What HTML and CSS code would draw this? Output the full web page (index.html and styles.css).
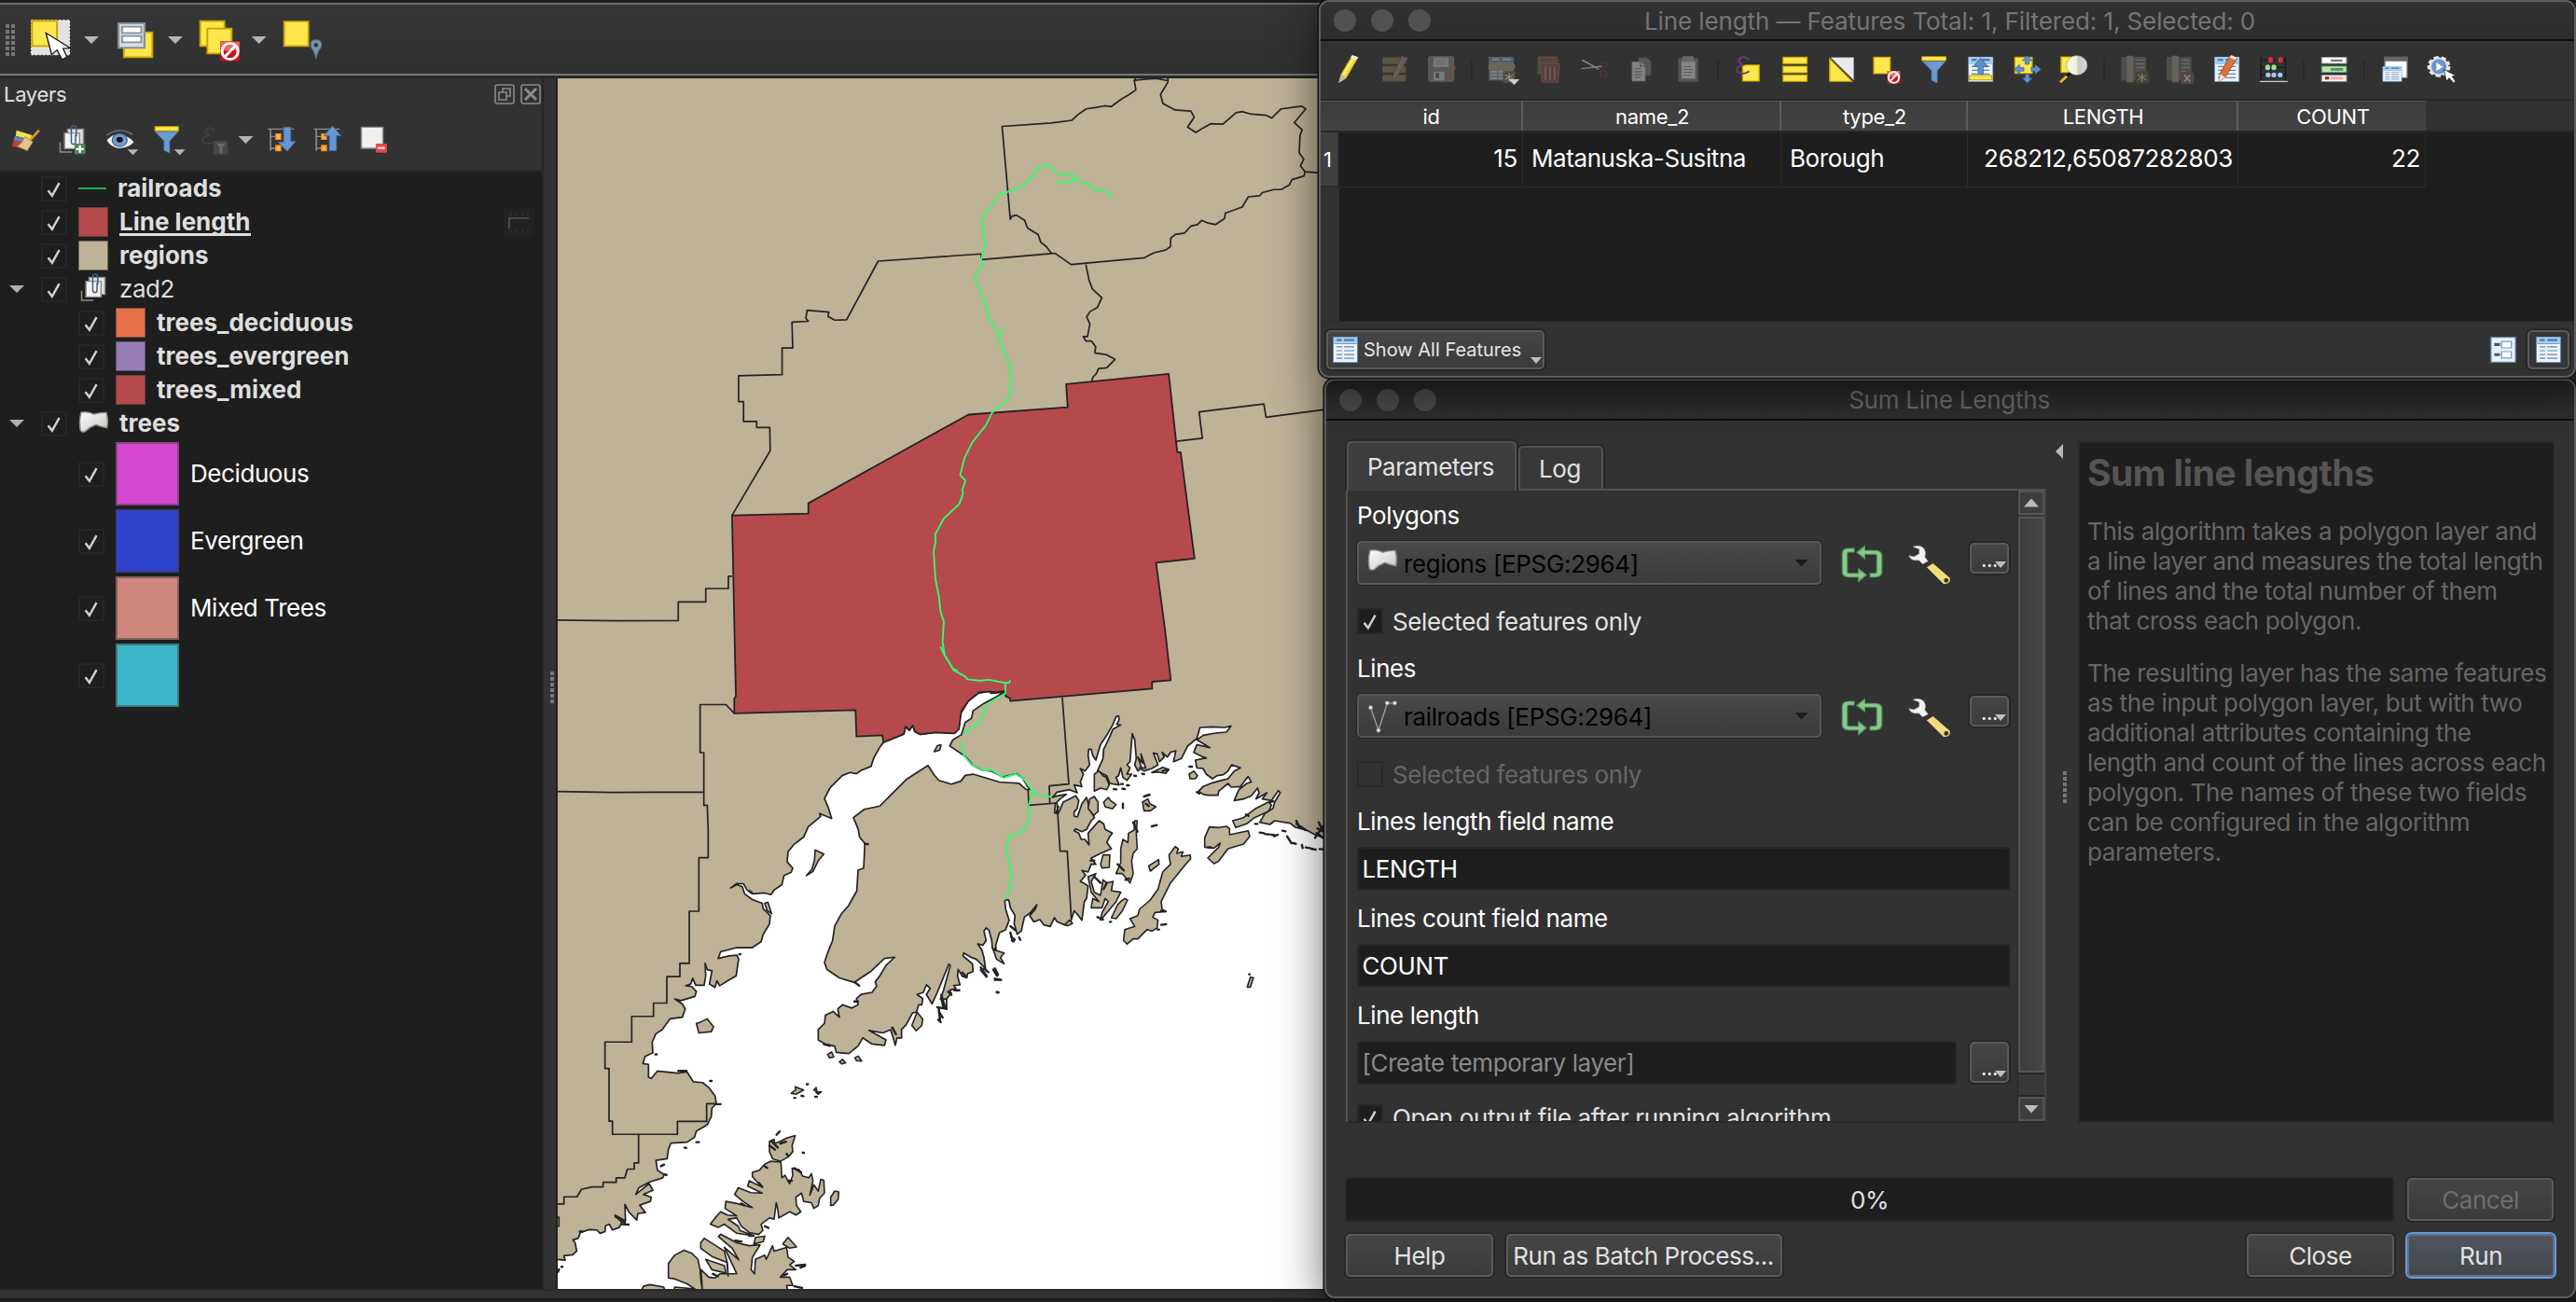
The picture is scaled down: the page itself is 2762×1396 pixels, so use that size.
FILE: index.html
```html
<!DOCTYPE html>
<html lang="en">
<head>
<meta charset="utf-8">
<title>QGIS</title>
<link rel="stylesheet" href="styles.css">
</head>
<body>
<svg class="defs" aria-hidden="true">
  <defs>
    <linearGradient id="polyFill" x1="0" y1="0" x2="1" y2="1"><stop offset="0" stop-color="#fff"/><stop offset="1" stop-color="#c4c4c0"/></linearGradient>
    <linearGradient id="lens" x1="0" y1="0" x2="1" y2="0"><stop offset="0" stop-color="#fdfce0"/><stop offset=".5" stop-color="#f2f0d8"/><stop offset=".55" stop-color="#c9c9c4"/><stop offset="1" stop-color="#d8d8d4"/></linearGradient>
    <symbol id="check" viewBox="0 0 28 27"><path d="M6.5 15.5l5 6.5 9-16" fill="none" stroke="#d0d0d0" stroke-width="2.9"/></symbol>
    <symbol id="poly" viewBox="218 182 88 72" preserveAspectRatio="none"><path d="M226 188Q246 184 262 194 280 188 298 189 304 210 300 236 284 232 268 226 252 232 236 248 228 250 224 244 219 214 226 188Z" fill="url(#polyFill)" stroke="#8c8c84" stroke-width="4"/></symbol>
    <symbol id="noentry" viewBox="0 0 56 64" preserveAspectRatio="none"><rect x="1" y="1" width="54" height="62" rx="3" fill="#c41414"/><path d="M2 2H54V30H2Z" fill="#e86a60"/><ellipse cx="28" cy="32" rx="22" ry="25" fill="none" stroke="#f6f6f6" stroke-width="8"/><path d="M13 50L43 14" stroke="#f6f6f6" stroke-width="8"/></symbol>
    <symbol id="clip" viewBox="165 400 78 100" preserveAspectRatio="none"><path d="M169 459v31h33" fill="none" stroke="#8d8d89" stroke-width="4"/><path d="M190 416h44v55h-44z" fill="#dfe0de" stroke="#8d8d89" stroke-width="4"/><path d="M181 429h42v50h-42z" fill="#f4f4f2" stroke="#8d8d89" stroke-width="4"/><path d="M214 440v-26q0-8-7-8t-7 8v42q0 9 6 9t6-9v-22" fill="none" stroke="#3f5f83" stroke-width="4"/></symbol>
    <symbol id="tbl" viewBox="0 0 60 82" preserveAspectRatio="none"><path d="M1 1h58v80H1z" fill="#eef2f6" stroke="#5b87bd" stroke-width="2.5"/><path d="M2 2h56v18H2z" fill="#a9cdea"/><path d="M9 7h12v7H9zM27 7h24v7H27z" fill="#4a7cb8"/><path d="M3 22h54" stroke="#6fa0d0" stroke-width="3"/><path d="M9 32h14M27 32h24M9 44h14M27 44h24M9 56h14M27 56h24M9 68h14M27 68h24" stroke="#5b87bd" stroke-width="3.5"/></symbol>
    <symbol id="loop" viewBox="1284 583 102 124" preserveAspectRatio="none"><g fill="none" stroke="#4e9a56" stroke-width="15"><path d="M1317 601H1303Q1293 601 1293 613V670Q1293 682 1303 682H1336"/><path d="M1336 608H1366Q1377 608 1377 618V670Q1377 682 1366 682H1353"/></g><path d="M1320 608L1343 584V632ZM1348 681L1325 657V706Z" fill="#4e9a56"/><g fill="none" stroke="#8cc68e" stroke-width="9"><path d="M1315 601H1303Q1293 601 1293 613V670Q1293 682 1303 682H1336"/><path d="M1334 608H1366Q1377 608 1377 618V670Q1377 682 1366 682H1356"/></g><path d="M1325 608L1340 592V624ZM1343 681L1328 665V698Z" fill="#8cc68e"/></symbol>
    <symbol id="wrench" viewBox="1444 580 108 132" preserveAspectRatio="none"><path d="M1458 590Q1472 582 1483 594 1491 606 1486 622L1494 636 1481 645 1472 633Q1452 636 1448 618L1460 622 1473 612V597Z" fill="#f2f2f2" stroke="#b5b5b5" stroke-width="1.5"/><path d="M1491 656L1506 643 1547 690Q1548 706 1532 710Z" fill="#f3db7c"/><ellipse cx="1538" cy="698" rx="7" ry="9" fill="#34322a" stroke="#f3db7c" stroke-width="3"/></symbol>
  </defs>
</svg>

<div class="main">
  <header class="toolbar">
    <div class="grip"></div>
    <svg width="46" height="46.7" viewBox="84 60 120 140" preserveAspectRatio="none" style="margin-left:16px"><path d="M88 65h107v111H88z" fill="#e2e2e2" stroke="#fff" stroke-width="3" stroke-dasharray="6 5"/><path d="M90 67h70v81H90z" fill="#fde74c" stroke="#c8a200" stroke-width="5"/><path d="M129 106L145 175 160 161 174 191 188 184 177 156 198 155Z" fill="#fff" stroke="#111" stroke-width="3.5"/></svg>
    <i class="tri" style="margin-left:12px"></i>
    <svg width="42" height="46.7" viewBox="324 60 110 140" preserveAspectRatio="none" style="margin-left:18px"><path d="M347 104h80v80h-80z" fill="#fde74c" stroke="#c8a200" stroke-width="5"/><path d="M332 75h73v79h-73z" fill="#d5e0e8" stroke="#858f96" stroke-width="6"/><path d="M342 86h54v20h-54zM342 116h54v20h-54z" fill="#fff" stroke="#8a8f93" stroke-width="5"/></svg>
    <i class="tri" style="margin-left:14px"></i>
    <svg width="46.7" height="46.7" viewBox="555 60 122 140" preserveAspectRatio="none" style="margin-left:16px"><path d="M562 68h68v80h-68z" fill="#fde74c" stroke="#c8a200" stroke-width="5"/><path d="M582 92h68v80h-68z" fill="#fde74c" stroke="#c8a200" stroke-width="5"/><use href="#noentry" x="617" y="132" width="57" height="66"/></svg>
    <i class="tri" style="margin-left:11px"></i>
    <svg width="45.2" height="46.7" viewBox="790 60 118 140" preserveAspectRatio="none" style="margin-left:16px"><path d="M797 69h68v79h-68z" fill="#fde74c" stroke="#c8a200" stroke-width="5"/><path d="M886 190Q882 165 873 153 866 128 886 128 906 128 900 153 890 165 886 190Z" fill="#7695a9" stroke="#54748a" stroke-width="3"/><ellipse cx="886" cy="145" rx="6" ry="7" fill="#333"/></svg>
  </header>

  <div class="workspace">
    <aside class="layers">
      <div class="layers-head"><span>Layers</span>
        <svg width="22" height="22" viewBox="0 0 22 22"><g fill="none" stroke="#8a8a8a" stroke-width="1.6"><rect x="1" y="1" width="20" height="20" rx="2"/><path d="M5 9h8v8H5zM9 9V5h8v8h-4"/></g></svg>
        <svg width="22" height="22" viewBox="0 0 22 22"><g fill="none" stroke="#8a8a8a"><rect x="1" y="1" width="20" height="20" rx="2" stroke-width="1.6"/><path d="M5 5l12 12M17 5L5 17" stroke-width="3"/></g></svg>
      </div>
      <div class="layers-tools">
        <svg width="30" height="33.3" viewBox="34 400 78 100" preserveAspectRatio="none"><path d="M46 420L90 436 84 450 44 438Z" fill="#f7e04a"/><path d="M42 438L70 446 66 462 38 452Z" fill="#5b86bb"/><path d="M38 452L64 460 52 476 34 472Z" fill="#cc3a2e"/><path d="M70 440L92 458 76 486 48 472 60 460Z" fill="#e8c088" stroke="#a0703a" stroke-width="2"/><path d="M84 452L109 420" stroke="#e09a2a" stroke-width="7"/></svg>
        <svg width="30" height="33.3" viewBox="165 400 78 100" preserveAspectRatio="none" style="margin-left:20px"><use href="#clip" x="165" y="400" width="78" height="100"/><rect x="209" y="463" width="30" height="34" rx="3" fill="#4d8a52"/><path d="M224 468v24M213 480h22" stroke="#fff" stroke-width="6"/></svg>
        <svg width="36" height="33.3" viewBox="294 400 94 100" preserveAspectRatio="none" style="margin-left:19.5px"><path d="M298 452Q332 410 374 458 360 478 330 478 308 474 298 452Z" fill="#f0f0ee"/><circle cx="334" cy="452" r="21" fill="#6c9bd0" stroke="#3d5f8c" stroke-width="3"/><circle cx="334" cy="450" r="9" fill="#111"/><path d="M298 436Q334 406 370 434" fill="none" stroke="#777" stroke-width="4"/><path d="M356 482h30l-15 18z" fill="#b5b5b5"/></svg>
        <svg width="34" height="33.3" viewBox="430 400 88 100" preserveAspectRatio="none" style="margin-left:16px"><path d="M433 424h65L474 455V494L458 485V455Z" fill="#6a9bd1" stroke="#3f6a9c" stroke-width="2"/><path d="M433 408h65v14h-65z" fill="#fde74c" stroke="#c8a200" stroke-width="3"/><path d="M486 482h31l-15 18z" fill="#b5b5b5"/></svg>
        <svg width="29" height="33.3" viewBox="564 400 76 100" preserveAspectRatio="none" style="margin-left:17px"><path d="M600 422Q592 408 580 414 568 424 586 436 564 440 568 456 580 470 598 458" fill="none" stroke="#414141" stroke-width="5"/><rect x="598" y="454" width="40" height="44" rx="5" fill="#484848"/><path d="M606 462h26l-9 14v18h-8v-18z" fill="#6a6a6a"/></svg>
        <i class="tri" style="margin-left:11px"></i>
        <svg width="31" height="33.3" viewBox="752 400 80 100" preserveAspectRatio="none" style="margin-left:15px"><path d="M753 416h72M760 416v70M760 440h14M760 478h14" fill="none" stroke="#8f8f8b" stroke-width="4"/><path d="M775 432h13v17h-13zM775 469h13v17h-13z" fill="#fdb45a" stroke="#f58a1a" stroke-width="4"/><path d="M796 410h20v46h13L806 488 780 458h16z" fill="#6596cf" stroke="#3c6695" stroke-width="2.5"/></svg>
        <svg width="31" height="33.3" viewBox="882 400 80 100" preserveAspectRatio="none" style="margin-left:18.5px"><path d="M883 416h72M890 416v70M890 440h14M890 478h14" fill="none" stroke="#8f8f8b" stroke-width="4"/><path d="M905 432h13v17h-13zM905 469h13v17h-13z" fill="#fdb45a" stroke="#f58a1a" stroke-width="4"/><path d="M926 486h20V438h13L935 406 911 438h15z" fill="#6596cf" stroke="#3c6695" stroke-width="2.5"/></svg>
        <svg width="30" height="33.3" viewBox="1012 400 78 100" preserveAspectRatio="none" style="margin-left:19px"><path d="M1016 410h60v68h-60z" fill="#f0f0ee" stroke="#8f8f8b" stroke-width="4"/><rect x="1056" y="463" width="31" height="29" rx="4" fill="#ee4444"/><path d="M1061 477h20" stroke="#fff" stroke-width="6"/></svg>
      </div>
      <div class="tree">
        <div class="row"><i class="exp"></i><svg class="cb"><use href="#check"/></svg><i class="line"></i><b style="margin-left:12px">railroads</b></div>
        <div class="row"><i class="exp"></i><svg class="cb"><use href="#check"/></svg><i class="sw" style="background:#b6494c"></i><b class="u">Line length</b><svg class="mem" width="33" height="33" viewBox="0 0 33 33"><rect width="33" height="33" rx="3" fill="#222"/><path d="M6 23V12H27" fill="none" stroke="#474747" stroke-width="2"/><path d="M8 9V5M14 9V5M20 9V5M26 9V5M8 24V28M14 24V28M20 24V28M26 24V28" stroke="#2b2b2b" stroke-width="2"/></svg></div>
        <div class="row"><i class="exp"></i><svg class="cb"><use href="#check"/></svg><i class="sw" style="background:#beb297"></i><b>regions</b></div>
        <div class="row"><i class="exp open"></i><svg class="cb"><use href="#check"/></svg><svg class="ic" width="30" height="33.3"><use href="#clip"/></svg><span>zad2</span></div>
        <div class="row sub"><svg class="cb"><use href="#check"/></svg><i class="sw" style="background:#e67148"></i><b>trees_deciduous</b></div>
        <div class="row sub"><svg class="cb"><use href="#check"/></svg><i class="sw" style="background:#987db4"></i><b>trees_evergreen</b></div>
        <div class="row sub"><svg class="cb"><use href="#check"/></svg><i class="sw" style="background:#b6494c"></i><b>trees_mixed</b></div>
        <div class="row"><i class="exp open"></i><svg class="cb"><use href="#check"/></svg><svg class="pi" width="33" height="25"><use href="#poly"/></svg><b style="margin-left:11px">trees</b></div>
        <div class="row big sub"><svg class="cb"><use href="#check"/></svg><i class="sw" style="background:#d648d0"></i><span>Deciduous</span></div>
        <div class="row big sub"><svg class="cb"><use href="#check"/></svg><i class="sw" style="background:#2e44cf"></i><span>Evergreen</span></div>
        <div class="row big sub"><svg class="cb"><use href="#check"/></svg><i class="sw" style="background:#cf867c"></i><span>Mixed Trees</span></div>
        <div class="row big sub"><svg class="cb"><use href="#check"/></svg><i class="sw" style="background:#3eb6ca"></i></div>
      </div>
    </aside>
    <div class="splitter"><i></i></div>
    <svg class="map" width="832" height="1298" viewBox="598 84 832 1298">
      <rect x="598" y="84" width="832" height="1298" fill="#beb297"/>
      <!-- sea: Cook Inlet side -->
      <g class="sea" transform="translate(590 700) scale(.33333 .44388)">
        <path d="M-20 1475L24 1465 48 1467 44 1456 72 1454 85 1445 80 1425 73 1418 90 1414 97 1400 125 1393 150 1394 160 1402 176 1398 178 1384 190 1380 200 1394 222 1388 230 1376 208 1358 242 1372 240 1332 252 1350 278 1370 282 1354 306 1352 288 1334 322 1325 325 1315 300 1308 330 1298 318 1282 275 1308 285 1292 320 1278 362 1268 366 1260 345 1250 340 1226 376 1222 380 1200 388 1184 440 1182 464 1170 470 1155 505 1140 518 1120 520 1100 534 1088 530 1070 510 1050 490 1038 460 1036 440 1012 410 1015 345 1010 325 1028 316 1025 316 994 298 992 305 975 330 966 328 940 340 920 360 910 385 884 425 880 434 860 425 848 400 836 420 840 465 830 470 818 455 806 436 804 452 800 458 786 468 803 495 803 500 780 498 750 505 765 520 768 512 800 530 808 536 792 545 804 575 790 598 780 606 740 600 730 575 732 540 738 548 722 600 712 650 712 678 698 685 680 705 655 708 635 685 618 682 605 650 596 625 582 618 565 600 560 580 568 600 557 622 558 632 572 650 582 690 580 710 584 720 573 745 560 752 538 775 530 780 520 762 505 765 480 785 462 815 445 830 420 870 395 866 388 905 400 895 375 882 352 900 326 940 296 965 289 985 292 1000 284 1032 274 1040 255 1060 228 1072 216 1135 197 1143 178 1155 187 1166 175 1172 190 1190 197 1240 192 1300 194 1313 180 1316 150 1330 135 1345 115 1375 98 1412 93 1418 98 1460 95 1430 108 1395 122 1360 140 1355 158 1335 168 1322 198 1295 210 1285 225 1335 250 1360 272 1390 283 1420 286 1456 300 1500 292 1520 304 1542 330 1530 330 1508 315 1445 312 1400 302 1360 293 1335 296 1320 310 1290 317 1250 308 1235 295 1215 272 1145 306 1100 340 1060 370 1010 378 975 398 990 425 995 445 1012 460 1008 520 990 525 986 575 960 610 935 632 915 660 908 695 892 725 882 748 890 765 930 785 978 796 1030 770 1075 738 1108 735 1080 755 1060 780 1045 795 1050 805 1035 820 1000 825 985 835 990 850 970 858 940 850 925 860 930 880 910 866 885 875 882 895 862 910 862 935 885 945 915 950 920 965 960 968 990 950 1005 930 1035 945 1075 948 1080 935 1025 912 1070 918 1095 910 1110 948 1115 930 1130 930 1130 910 1145 898 1165 870 1178 868 1185 850 1195 850 1198 835 1180 825 1200 820 1210 802 1222 810 1210 825 1228 848 1245 820 1282 752 1287 755 1265 815 1255 836 1275 836 1275 1620 -20 1620Z"/>
      </g>
      <!-- sea: Prince William Sound side -->
      <g class="sea" transform="translate(1000 680) scale(.33333)">
        <path d="M45 1172L60 1155 55 1145 75 1140 68 1130 88 1128 80 1100 82 1078 95 1100 110 1105 112 1092 130 1085 128 1060 98 1035 100 1025 125 1040 140 1045 160 1065 170 1075 165 1040 158 1015 145 996 162 1000 172 985 165 955 172 945 181 952 190 985 192 1010 205 1030 203 1000 215 960 235 950 246 920 235 885 232 858 238 854 245 855 250 880 265 905 262 930 272 965 285 955 295 910 315 895 335 870 330 885 312 905 325 925 345 918 358 935 378 940 392 912 400 925 425 935 445 922 455 890 465 900 480 920 488 860 495 850 500 810 485 800 475 795 492 775 480 760 500 765 510 740 525 740 510 720 540 705 575 690 560 670 570 650 578 640 555 628 550 610 535 600 500 640 503 678 490 660 478 660 470 640 455 632 460 626 480 635 495 628 510 600 520 590 505 560 495 525 480 545 470 575 465 588 455 585 455 572 465 560 470 535 460 520 440 530 420 540 405 575 392 575 395 545 410 530 430 515 400 520 385 525 400 508 440 500 465 510 455 485 480 490 475 475 485 450 475 432 490 440 505 420 500 390 502 370 510 370 515 390 525 405 540 355 560 325 580 290 590 265 598 263 600 275 592 290 605 292 580 305 565 340 550 370 548 400 530 440 560 455 570 480 600 485 590 460 598 455 605 430 612 460 625 470 640 450 625 450 635 430 625 420 635 410 642 320 650 340 655 400 650 420 660 440 672 430 660 395 675 415 670 385 685 430 665 430 680 440 705 432 725 420 710 382 722 385 730 410 745 395 738 380 755 395 765 380 782 375 775 410 800 400 820 360 850 335 860 300 900 298 940 300 960 295 945 315 910 318 870 325 850 340 870 352 892 365 862 358 850 355 840 380 870 395 880 398 845 405 850 430 870 432 880 450 900 465 915 455 935 452 950 440 962 420 990 430 970 440 950 465 930 470 900 478 870 490 855 505 870 515 885 518 918 518 920 505 950 480 960 492 990 490 1005 470 1015 458 1025 475 1010 480 985 500 970 535 1000 530 1025 520 1045 495 1050 510 1040 530 1075 510 1060 530 1090 535 1112 503 1118 510 1100 540 1095 560 1070 575 1052 605 1085 612 1100 600 1150 608 1165 620 1200 630 1175 615 1230 645 1260 655 1330 660 1330 2200 45 2200Z"/>
      </g>
      <rect x="1006" y="1083" width="20" height="320" fill="#fff"/>
      <!-- islands -->
      <g class="isle" transform="translate(590 700) scale(.33333 .44388)">
        <path d="M470 895L480 893 505 884 525 903 518 915 478 918ZM852 476L880 486 862 502 845 528 824 538 842 522 850 500ZM1235 239L1245 224 1257 222 1253 235ZM690 605L700 602 712 630 697 622ZM1163 900L1180 868 1198 885 1195 900 1177 913ZM892 970L905 964 912 976 898 978ZM930 988L940 982 950 990 938 993ZM980 978L990 974 1002 986 985 985ZM775 1064L790 1055 788 1048 815 1056 790 1066ZM902 1335L902 1315 915 1300 928 1302 926 1320 910 1334ZM848 1056L855 1050 858 1060ZM855 1062L872 1060 862 1066Z"/>
        <path d="M705 1180L720 1175 722 1185 740 1180 760 1172 788 1166 778 1190 780 1205 765 1218 740 1228 715 1222 705 1205Z"/>
        <path d="M650 1255L672 1250 690 1235 710 1228 742 1230 745 1268 755 1262 770 1282 780 1262 778 1245 800 1248 812 1264 832 1268 840 1258 845 1275 835 1310 848 1285 862 1300 870 1272 880 1274 882 1305 866 1318 862 1335 848 1342 840 1328 815 1325 808 1305 790 1315 792 1335 806 1350 790 1358 770 1350 735 1365 732 1345 727 1328 720 1368 705 1365 678 1380 684 1395 670 1405 640 1400 615 1385 600 1365 572 1368 605 1385 610 1395 655 1408 600 1402 560 1380 540 1388 515 1380 530 1365 548 1350 570 1358 600 1360 562 1342 565 1325 600 1330 650 1340 620 1325 593 1308 605 1292 645 1304 682 1305 635 1288 640 1275 680 1290 650 1265Z"/>
        <path d="M380 1510L380 1475 400 1455 430 1443 455 1450 475 1465 482 1490 485 1520 492 1550 440 1524 400 1512ZM484 1425L495 1414 560 1445 570 1475 572 1505 568 1472 520 1458 484 1438ZM500 1465L560 1480 565 1498 520 1490ZM492 1570L485 1490 510 1508 530 1510 545 1500 600 1500 575 1460 560 1436 606 1466 585 1438 541 1410 548 1404 600 1425 640 1432 675 1430 650 1460 646 1490 657 1500 660 1465 690 1455 695 1465 715 1432 720 1445 760 1436 765 1460 785 1470 770 1478 790 1490 762 1490 740 1508 770 1508 780 1528 760 1528 775 1570ZM655 1428L660 1412 690 1409 685 1422ZM748 1428L765 1412 792 1435 770 1438ZM20 1385L28 1385 28 1363 20 1363ZM270 1570L300 1530 320 1526 365 1532 380 1570ZM390 1570L400 1532 460 1536 470 1570Z"/>
        <path class="speck" d="M412 1010l26 0M530 1090l18 0M705 1190l18 10M712 1180l20 15M740 1185l18 -4M728 1164l10 -8M812 1207l4 1M690 1240l8 4M785 1245l22 10M765 1275l12 0M470 1182l8 0M432 1195l5 1M356 1240l10 -4M368 1260l6 1M230 1380l22 1M210 1362l30 14M95 1398l8 0M640 1408l14 0M690 1385l12 4M595 1420l20 2M614 1330l10 4M790 1480l30 -2M805 1485l14 -4M750 1504l12 -4M785 1530l25 4M825 1042l4 0M808 1070l6 1M785 1075l3 0M852 1072l6 0M514 1034l5 0M608 728l4 0M338 970l4 0M640 575l8 4M1012 462l10 0M1385 760l18 20M1425 765l12 15M1430 715l20 30M1430 790l18 0M1437 819l5 1M1250 860l4 30M1258 835l6 20M1480 660l16 10M1482 685l12 8M978 842l12 0M1300 815l16 0M1335 780l-10 -8M25 1495l3 -6M36 1483l3 0M523 1500l16 6M980 796l14 8M670 1280l12 10M760 1210l4 4M880 945l20 4M1100 905l12 16"/>
      </g>
      <g class="isle" transform="translate(1000 680) scale(.33333)">
        <path d="M780 683L790 690 785 705 805 700 800 715 828 710 830 722 810 745 765 800 735 860 738 885 750 892 715 895 708 910 725 920 722 945 705 955 690 950 660 980 645 980 625 997 614 985 618 950 650 940 635 915 660 905 665 885 700 855 725 820 740 765 765 740 760 710 768 700Z"/>
        <path d="M890 620L920 622 945 618 955 625 955 645 1015 632 1020 650 1000 675 950 690 920 730 905 738 885 720 920 685 925 672 905 688 875 685 875 655ZM965 600L1000 590 1040 560 1080 540 1090 550 1080 570 1035 590 1010 610 975 622ZM650 600L658 600 655 640 658 690 645 705 640 730 645 770 635 800 610 770 590 770 605 735 605 690 612 660 628 670 630 640 648 630ZM520 450L535 440 548 455 558 460 568 485 560 500 540 495 520 505ZM550 540L565 525 572 535 590 548 578 562 555 555ZM505 530L520 522 532 540 532 570 518 583 500 560ZM675 540L692 530 698 545 718 555 700 568 680 568ZM540 740L548 710 570 710 568 750 545 752ZM500 780L525 770 510 795 520 830 540 840 548 790 560 800 580 795 575 825 605 830 590 860 565 890 540 920 545 895 565 860 555 850 545 880 510 880 515 850 535 860 510 830ZM695 745L727 725 728 740 700 762ZM705 445L740 428 760 435 750 448 725 443ZM825 450L840 440 852 455 845 465 828 465ZM575 912L595 870 605 860 618 850 627 855 610 890 590 915ZM1012 1135L1022 1103 1032 1105 1022 1135ZM425 935L440 920 450 930 435 938ZM195 1015L230 1025 218 1040 230 1060 205 1045Z"/>
        <path class="speck" d="M680 522l18 -6M705 618l16 -4M612 545l0 14M583 498l8 1M610 497l8 1M625 486l6 0M648 455l6 1M674 449l6 1M606 482l6 0M826 426l8 0M850 508l8 4M1037 610l8 0M1052 638l14 2M1070 643l14 1M1090 645l10 1M1098 650l12 -5M1125 632l10 2M1140 650l14 22M1160 672l8 2M1188 678l2 10M1200 686l14 2M1218 690l14 3M1245 691l14 1M1170 610l30 20M1170 600l8 18M1230 655l28 -40M1238 625l20 10M1235 640l20 15M1242 605l14 30M250 960l8 28M255 985l6 3M278 975l4 8M200 1075l10 20M200 1108l20 4M206 1152l4 1M155 1080l18 22M165 1075l14 12M15 1200l30 5M20 1215l12 18M18 1240l8 8M28 1160l12 40M60 1160l-10 -10M735 935l16 -2M724 950l4 0M735 890l14 1M570 925l4 0M645 605l14 30M595 740l20 20M620 790l12 -4M530 910l18 8M520 780l20 20M560 800l-10 20M740 440l14 -4M685 545l10 8M885 685l10 0M1008 580l8 4M1085 540l10 -3M1018 1094l2 0M398 575l6 -20M508 728l12 0"/>
      </g>
      <!-- region borders -->
      <g class="border" transform="translate(590 700) scale(.33333 .44388)"><path d="M592 146L565 125H482V241H494V368H505L508 430V495H478V624H447V750H417V782H375V846H332V878H262V940H176V1004H189V1131H200V1163H409V1132H503V1089H530M20 335L200 337 494 336M284 1163V1232H270V1247H248L240 1268H212V1279H170V1290H134L100 1296 86 1314H44V1331H20"/></g>
      <g class="border" transform="translate(1000 680) scale(.33333)"><path d="M417 204L438 482 375 488 377 543M307 500L309 550 400 543 410 698 433 698 446 915"/></g>
      <g class="border" transform="translate(740 80) scale(.44005 .40816)">
        <path d="M1088 5L1082 15 1086 40 1070 52 1050 65 1026 84 1010 82 990 86 965 90 945 105 930 120 880 127 760 136 780 380 784 372 795 369 815 383 822 403 848 420 854 440 868 452 880 469 890 470 928 499 1107 481 1130 468 1158 461 1170 452 1171 430 1182 420 1205 416 1220 398 1236 394 1246 383 1262 390 1280 394 1302 378 1304 364 1345 348 1360 321 1388 318 1394 310 1422 302 1440 302 1460 290 1466 276 1496 266 1498 255 1487 240 1495 222 1484 205 1486 160 1491 145 1472 126 1500 90 1490 83 1440 90 1417 114 1404 107 1368 104 1345 97 1330 100 1298 130 1268 129 1250 140 1232 152 1212 138 1228 112 1220 96 1182 93 1152 76 1146 52 1164 20 1164 5M1082 15L1110 12 1136 10 1164 16M1498 255L1560 260M102 1158L195 988 194 927H162V911H130V859H118V791L224 788V718H250L248 650 288 648 282 640 285 619 338 624 336 635 352 645 381 644 458 490 709 471 710 486 880 470M964 499L972 540 980 563 1003 586 992 612 975 622 966 636 974 655 968 688 958 688 964 700 978 700 988 715 986 731 1015 736 1035 748 1015 770 995 772 990 785 981 795 979 806M1186 963L1248 955 1240 886 1398 865 1403 900 1560 878M102 1318H93V1350H38V1385H-29V1434L-180 1435 -330 1433"/>
      </g>
      <path d="M784.9 552.7L866.7 550.6V539.6L1038.4 444.5 1144.8 436.7 1143.1 411.8 1253.1 400.8 1262.3 484.9 1265.9 484.9 1280.8 598.8 1239.5 603.3 1249.1 674.7 1255.3 729.3 1235.3 731V738.3L1083.3 751.7 1082.7 748.3 1078.3 746.7 1077.7 741 1066.7 742.5 1061.3 741.3 1050 742.3 1038.3 751.7 1030.7 762.7 1028.3 781.7 1023.5 786.4 1003.3 785.3 986.7 787.4 981 784.5 978.7 777.7 975 783 971 779 969.3 787 947.3 795.9 946 788.3 918.3 789.7 917.3 761.3 787.3 764.8V749L789 746.6 788 700Z" fill="#b6494c" stroke="#232323" stroke-width="1.8"/>
      <!-- railroads -->
      <g class="rail" transform="translate(740 80) scale(.44005 .40816)"><path d="M1029 327L1022 312 1008 305 985 302 975 290 950 279 935 274 931 263 900 263 886 252 880 241 865 238 852 241 832 270 815 288 795 301 752 315 735 345 714 370 711 390 718 447 708 490 714 502 697 522 694 537 722 608 725 635 750 677 767 676M750 677L752 695 770 740 782 768 778 780 782 810 780 830 772 855 735 889 720 922 688 965 668 1008 658 1052 671 1067 663 1090 665 1100 656 1128 618 1166 597 1208 598 1230 593 1252 598 1328 606 1370 610 1410 618 1437 615 1490 620 1525 640 1560 652 1567M895 283L931 281 931 270"/></g>
      <g class="rail" transform="translate(590 700) scale(.33333 .44388)"><path d="M1255 -15L1268 5 1298 42 1335 57 1342 64 1380 67 1412 65 1460 72 1476 72 1480 66M1464 72V98L1430 112 1405 125 1384 160 1378 172 1355 178 1330 198"/></g>
      <g class="rail" transform="translate(1000 680) scale(.33333)"><path d="M85 348L97 365 100 390 125 420 165 438 190 437 228 462 268 450 295 468 320 502 340 517 382 523M320 502L318 525 306 555 311 580 307 605 290 634 245 650 238 695 253 770 247 820 235 852"/></g>
    </svg>
  </div>
  <footer class="status"></footer>
</div>

<!-- processing dialog -->
<section class="win dialog">
  <div class="titlebar"><i></i><i></i><i></i><h1>Sum Line Lengths</h1></div>
  <div class="dlg-body">
    <div class="left">
      <div class="tabs"><div class="tab on">Parameters</div><div class="tab">Log</div></div>
      <div class="pane">
        <div class="form">
          <label>Polygons</label>
          <div class="frow"><div class="combo"><svg width="33" height="25" style="margin-top:-6px"><use href="#poly"/></svg><span>regions [EPSG:2964]</span><i></i></div><svg class="loop" width="45" height="41"><use href="#loop"/></svg><svg class="wr" width="48" height="44"><use href="#wrench"/></svg><button class="dots short">...<i></i></button></div>
          <div class="chk"><svg><use href="#check"/></svg>Selected features only</div>
          <label class="a">Lines</label>
          <div class="frow"><div class="combo"><svg width="33" height="38" viewBox="146 1090 74 86" preserveAspectRatio="none"><path d="M154 1112L173 1167 194 1101H212" fill="none" stroke="#a0a098" stroke-width="3"/><g fill="#e8e8e4" stroke="#77776f" stroke-width="2"><circle cx="154" cy="1112" r="5"/><circle cx="173" cy="1167" r="5"/><circle cx="194" cy="1101" r="5"/><circle cx="212" cy="1101" r="5"/></g></svg><span>railroads [EPSG:2964]</span><i></i></div><svg class="loop" width="45" height="41"><use href="#loop"/></svg><svg class="wr" width="48" height="44"><use href="#wrench"/></svg><button class="dots short">...<i></i></button></div>
          <div class="chk off"><svg></svg>Selected features only</div>
          <label class="a">Lines length field name</label>
          <div class="input">LENGTH</div>
          <label class="b">Lines count field name</label>
          <div class="input">COUNT</div>
          <label class="b">Line length</label>
          <div class="frow"><div class="input ph">[Create temporary layer]</div><button class="dots">...<i></i></button></div>
          <div class="chk last"><svg><use href="#check"/></svg>Open output file after running algorithm</div>
        </div>
        <div class="sbar"><b class="up"></b><i></i><em></em><b class="down"></b></div>
      </div>
    </div>
    <div class="mid"><i class="arrow"></i><i class="vdots"></i></div>
    <article class="help">
      <h2>Sum line lengths</h2>
      <p>This algorithm takes a polygon layer and<br>a line layer and measures the total length<br>of lines and the total number of them<br>that cross each polygon.</p>
      <p>The resulting layer has the same features<br>as the input polygon layer, but with two<br>additional attributes containing the<br>length and count of the lines across each<br>polygon. The names of these two fields<br>can be configured in the algorithm<br>parameters.</p>
    </article>
  </div>
  <div class="prog"><div class="bar">0%</div><button class="btn dis">Cancel</button></div>
  <div class="btns"><button class="btn">Help</button><button class="btn wide">Run as Batch Process...</button><span></span><button class="btn">Close</button><button class="btn run">Run</button></div>
</section>

<!-- attribute table -->
<section class="win table">
  <div class="titlebar"><i></i><i></i><i></i><h1>Line length — Features Total: 1, Filtered: 1, Selected: 0</h1></div>
  <div class="tools">
    <svg viewBox="53 170 100 105"><path d="M80 264L86 236 112 178 126 186 98 250Z" fill="#f2dc3c" stroke="#9a8410" stroke-width="2"/><path d="M91 240L116 184" stroke="#fff6a8" stroke-width="3"/><path d="M80 266L86 238 98 250Z" fill="#b9b9b9"/><path d="M108 184L113 176 127 183 123 192Z" fill="#eee"/></svg>
    <svg viewBox="166 170 100 105"><path d="M186 184h56v21h-56zM186 212h56v21h-56zM186 240h56v21h-56z" fill="#5c5843" stroke="#4a4636" stroke-width="2"/><path d="M208 264L212 238 232 180 247 186 220 250Z" fill="#665c58" stroke="#4a4542" stroke-width="2"/></svg>
    <svg viewBox="277 170 100 105"><rect x="296" y="181" width="60" height="80" rx="4" fill="#54585a" stroke="#5c5f4c" stroke-width="3"/><path d="M307 184h37v30h-37z" fill="#7a7a7a"/><path d="M311 192h28M311 199h28M311 206h28" stroke="#5e6264" stroke-width="2"/><path d="M308 230h26v28h-26z" fill="#7a7a7a"/><path d="M313 234h8v16h-8z" fill="#444"/><path d="M336 262L340 240 352 208 362 214 346 254Z" fill="#655049"/></svg>
    <i class="sep"></i>
    <svg viewBox="423 170 100 105"><path d="M441 182h60v76h-60z" fill="#62676d"/><path d="M441 182h60v18h-60z" fill="#525d66"/><path d="M449 190h16M474 190h20" stroke="#80868b" stroke-width="5"/><path d="M440 206h64v14h-64z" fill="#6c6751"/><path d="M446 230h50M446 240h50M446 250h30" stroke="#858a8e" stroke-width="4" stroke-dasharray="14 5"/><rect x="475" y="228" width="30" height="38" rx="3" fill="#504d3a"/><path d="M490 234v26M480 240l20 14M500 240l-20 14" stroke="#8c8c82" stroke-width="3"/><path d="M488 254h27l-13 18z" fill="#cfcfcf"/></svg>
    <svg viewBox="530 170 100 105"><path d="M554 182h46v22h-46zM554 208h20v28h-20z" fill="#514e3d" stroke="#5e5a46" stroke-width="2"/><path d="M560 192h46M582 186v6" stroke="#623a39" stroke-width="6"/><path d="M560 204h46l-4 60h-38z" fill="#553f3d" stroke="#694846" stroke-width="3"/><path d="M572 212v44M583 212v44M594 212v44" stroke="#7c605e" stroke-width="3"/></svg>
    <svg viewBox="644 170 100 105"><path d="M664 192L706 222M662 220L712 212" stroke="#858585" stroke-width="4"/><ellipse cx="718" cy="206" rx="8" ry="7" fill="none" stroke="#5a3636" stroke-width="3"/><ellipse cx="716" cy="236" rx="7" ry="10" fill="none" stroke="#5a3636" stroke-width="3"/><path d="M702 216L714 230" stroke="#5a3636" stroke-width="3"/></svg>
    <svg viewBox="756 170 100 105"><path d="M800 184h20l10 12v46h-30z" fill="#555"/><path d="M784 198h22l10 12v50h-32z" fill="#828282" stroke="#666" stroke-width="2"/><path d="M804 198v14h12M790 220h16M790 230h18M790 239h18M790 248h14" fill="none" stroke="#4d4d4d" stroke-width="2.5"/></svg>
    <svg viewBox="868 170 100 105"><rect x="895" y="186" width="48" height="76" rx="3" fill="#55554f"/><path d="M903 196h33v56h-33z" fill="#858585"/><path d="M905 180h27v18h-27z" fill="#6a6a6a"/><path d="M908 214h18M908 223h22M908 231h22M908 240h16" stroke="#4d4d4d" stroke-width="2.5"/></svg>
    <i class="sep"></i>
    <svg viewBox="1014 170 100 105"><path d="M1050 208h40v52h-40z" fill="#fde74c" stroke="#c8a200" stroke-width="3"/><path d="M1066 192Q1058 178 1046 184 1034 196 1052 208 1030 214 1038 230 1052 242 1066 228" fill="none" stroke="#6a3a70" stroke-width="5"/></svg>
    <svg viewBox="1124 170 100 105"><path d="M1145 183h58v21h-58zM1145 212h58v21h-58zM1145 240h58v21h-58z" fill="#fde74c" stroke="#c8a200" stroke-width="3"/></svg>
    <svg viewBox="1236 170 100 105"><path d="M1260 184h55v72z" fill="#e9eaec" stroke="#c9c9c9"/><path d="M1257 188v73h54z" fill="#fde74c" stroke="#c8a200" stroke-width="3"/></svg>
    <svg viewBox="1352 170 100 105"><path d="M1369 183h40v53h-40z" fill="#fde74c" stroke="#c8a200" stroke-width="3"/><use href="#noentry" x="1401" y="226" width="33" height="44"/></svg>
    <svg viewBox="1460 170 100 105"><path d="M1482 196h56L1518 226V266L1504 258V226Z" fill="#6a9bd1" stroke="#3f6a9c" stroke-width="2"/><path d="M1481 181h58v13h-58z" fill="#fde74c" stroke="#c8a200" stroke-width="2"/></svg>
    <svg viewBox="51 170 100 105"><use href="#tbl" x="70" y="181" width="62" height="82"/><path d="M74 242h54v14H74z" fill="#fde74c" stroke="#c8a200" stroke-width="3"/><path d="M101 186L118 212H107V238H95V212H84Z" fill="#5f91c9" stroke="#38608f" stroke-width="2"/></svg>
    <svg viewBox="166 170 100 105"><path d="M186 183h42v52h-42z" fill="#fde74c" stroke="#c8a200" stroke-width="3"/><g fill="#5f91c9" stroke="#38608f" stroke-width="1.5"><path d="M216 178l12 16h-7v12h-10v-12h-7zM216 266l12-16h-7v-12h-10v12h-7zM184 222l14-16v10h10v12h-10v10zM249 222l-14-16v10h-10v12h10v10z"/></g></svg>
    <svg viewBox="283 170 100 105"><path d="M302 182h30v50h-30z" fill="#fde74c" stroke="#c8a200" stroke-width="3"/><path d="M300 264L322 236" stroke="#e6b532" stroke-width="7"/><path d="M316 244l8-10" stroke="#111" stroke-width="8"/><ellipse cx="340" cy="209" rx="25" ry="31" fill="url(#lens)" stroke="#a5a5a0" stroke-width="2"/></svg>
    <i class="sep"></i>
    <svg viewBox="430 170 100 105"><path d="M448 182h60v76h-60z" fill="#4d4d4d"/><path d="M484 192h20M484 204h20M484 216h20M484 228h10" stroke="#6a6a6a" stroke-width="4"/><path d="M461 178h16v86h-16z" fill="#65625a"/><rect x="482" y="228" width="33" height="40" rx="5" fill="#454333"/><path d="M498 234v28M488 240l20 16M508 240l-20 16" stroke="#807f70" stroke-width="3"/></svg>
    <svg viewBox="547 170 100 105"><path d="M564 182h60v76h-60z" fill="#4d4d4d"/><path d="M600 192h20M600 204h20M600 216h20M600 228h10" stroke="#6a6a6a" stroke-width="4"/><path d="M577 178h16v86h-16z" fill="#65625a"/><rect x="598" y="232" width="32" height="37" rx="5" fill="#524747"/><path d="M607 240l14 22M621 240l-14 22" stroke="#8f8585" stroke-width="4"/></svg>
    <svg viewBox="658 170 100 105"><use href="#tbl" x="677" y="181" width="62" height="82"/><path d="M688 262L692 234 716 178 732 188 704 248Z" fill="#d8743a" stroke="#8a4318" stroke-width="2"/><path d="M688 262L692 236 704 248ZM714 184l5-8 13 8-4 8z" fill="#e8e0d8"/></svg>
    <svg viewBox="773 170 100 105"><path d="M793 183v76M852 183v76M793 192h59M793 216h59M793 240h59" stroke="#171717" stroke-width="3"/><path d="M790 261h67" stroke="#cfcfcf" stroke-width="4"/><g fill="#e03030"><ellipse cx="816" cy="192" rx="6" ry="9"/><ellipse cx="840" cy="192" rx="6" ry="9"/></g><g fill="#9be29b"><ellipse cx="809" cy="216" rx="6" ry="9"/><ellipse cx="824" cy="216" rx="6" ry="9"/></g><g fill="#9fcbea"><ellipse cx="810" cy="240" rx="6" ry="8"/><ellipse cx="824" cy="240" rx="6" ry="8"/><ellipse cx="839" cy="240" rx="6" ry="8"/></g></svg>
    <i class="sep"></i>
    <svg viewBox="920 170 100 105"><g stroke-width="2.5"><path d="M940 183h60v20h-60z" fill="#fff" stroke="#999"/><path d="M940 212h60v20h-60z" fill="#b4e8b4" stroke="#5aa05a"/><path d="M940 241h60v20h-60z" fill="#f6f0f0" stroke="#999"/></g><path d="M962 190h28v7h-28z" fill="#777"/><path d="M962 218h30v8h-30z" fill="#5d8d5d"/><path d="M948 246h10v9h-10z" fill="#b01818"/><path d="M962 246h30v9h-30z" fill="#f2aaaa"/></svg>
    <i class="sep"></i>
    <svg viewBox="1067 170 100 105"><path d="M1093 183h54v66h-54z" fill="#fff" stroke="#777" stroke-width="3"/><path d="M1092 182h56v14h-56z" fill="#666"/><use href="#tbl" x="1087" y="212" width="48" height="50"/></svg>
    <svg viewBox="1182 170 100 105"><ellipse cx="1226" cy="213" rx="24" ry="30" fill="none" stroke="#e8e8e8" stroke-width="8" stroke-dasharray="12 7"/><ellipse cx="1226" cy="213" rx="21" ry="27" fill="#6a98cc" stroke="#e8e8e8" stroke-width="5"/><path d="M1220 200l16 14-16 14z" fill="#fff"/><path d="M1238 222l6 38 7-10 10 16 6-5-9-16 10-2z" fill="#fff" stroke="#111" stroke-width="2"/></svg>
  </div>
  <div class="grid head"><span></span><span>id</span><span>name_2</span><span>type_2</span><span>LENGTH</span><span>COUNT</span></div>
  <div class="grid data"><span>1</span><span class="r">15</span><span>Matanuska-Susitna</span><span>Borough</span><span class="r">268212,65087282803</span><span class="r">22</span></div>
  <div class="empty"></div>
  <div class="foot">
    <button class="show"><svg width="27" height="28"><use href="#tbl"/></svg>Show All Features<i></i></button>
    <div class="views"><svg width="28" height="28" viewBox="1356 1081 64 82" preserveAspectRatio="none"><path d="M1358 1083h60v78h-60z" fill="#eef2f6" stroke="#5b87bd" stroke-width="3"/><path d="M1366 1101h14v9h-14zM1366 1133h14v9h-14z" fill="#3d5878"/><path d="M1384 1096h24v20h-24zM1384 1128h24v20h-24z" fill="#fff" stroke="#6b9bd0" stroke-width="3"/></svg><div class="sel"><svg width="27" height="28"><use href="#tbl"/></svg></div></div>
  </div>
</section>
</body>
</html>
```
FILE: styles.css
```css
* { box-sizing: border-box; }
body { margin: 0; width: 2762px; height: 1396px; overflow: hidden; position: relative; background: #323232; color: #fff; font: 26px "Inter", "Liberation Sans", sans-serif; letter-spacing: -0.42px; }
svg { display: block; flex: none; }
button { font: inherit; letter-spacing: inherit; color: inherit; padding: 0; margin: 0; }
.defs { position: absolute; width: 0; height: 0; }

/* main window */
.main { display: flex; flex-direction: column; width: 2762px; height: 1396px; }
.toolbar { height: 84px; border-top: 3px solid #1d1d1d; box-shadow: inset 0 2px #6b6b6b; background: linear-gradient(#363636, #303030); border-bottom: 2px solid #262626; display: flex; align-items: flex-start; padding: 17px 0 0 6px; position: relative; }
.toolbar::after { content: ""; position: absolute; left: 0; right: 0; bottom: 1px; height: 2px; background: #757575; }
.grip { width: 10px; height: 34px; margin-top: 6px; background: repeating-linear-gradient(#777 0 4px, transparent 4px 6px); -webkit-mask: linear-gradient(90deg, #000 4px, transparent 4px 6px, #000 6px); mask: linear-gradient(90deg, #000 4px, transparent 4px 6px, #000 6px); }
.tri { flex: none; width: 16px; height: 8px; background: #b4b4b4; clip-path: polygon(0 0, 100% 0, 50% 100%); }
.toolbar .tri { margin-top: 19px; }
.workspace { display: flex; height: 1298px; }
.layers { width: 583px; display: flex; flex-direction: column; border-right: 2px solid #272727; }
.layers-head { height: 34px; display: flex; align-items: center; padding: 0 0 0 4px; font-size: 22px; letter-spacing: -0.3px; color: #e0e0e0; }
.layers-head svg { margin-right: 6px; }
.layers-head span { margin-right: auto; }
.layers-head svg:last-child { margin-right: 1px; }
.layers-tools { height: 64px; padding: 15px 0 0 13px; display: flex; }
.layers-tools .tri { margin-top: 13px; }
.tree { flex: 1; background: #1e1e1e; border-top: 2px solid #2b2b2b; }
.row { height: 36px; display: flex; align-items: center; color: #dedede; }
.row b { font-weight: 700; letter-spacing: 0; margin-top: -2px; }
.row span { margin-top: -2px; }
.exp { width: 44px; height: 8px; }
.exp.open::before { content: ""; display: block; margin-left: 10px; width: 16px; height: 8px; background: #b0b0b0; clip-path: polygon(0 0, 100% 0, 50% 100%); }
.cb { width: 28px; height: 27px; border: 2px solid #262626; overflow: visible; margin-right: 12px; }
.sw { width: 32px; height: 32px; border: 1px solid rgba(60,60,60,.6); margin-right: 12px; }
.line { width: 30px; height: 2px; background: #1fae57; }
.row .u { border-bottom: 3px solid #dedede; line-height: 29px; height: 30px; margin-top: 0; }
.mem { margin: 0 8px 0 auto; }
.ic { margin: -2px 12px 0 2px; }
.pi { margin-top: -3px; }
.sub { padding-left: 84px; }
.big { height: 72px; color: #fff; }
.big .sw { width: 68px; height: 68px; border: 2px solid rgba(60,60,60,.5); margin-right: 12px; }
.splitter { width: 15px; border-right: 2px solid #222; padding-left: 7px; }
.splitter i { display: block; margin-top: 636px; width: 4px; height: 34px; background: repeating-linear-gradient(#777 0 4px, transparent 4px 6px); }
.map path { vector-effect: non-scaling-stroke; stroke-linejoin: round; }
.sea path { fill: #fff; stroke: #232323; stroke-width: 1.7px; }
.isle path { fill: #beb297; stroke: #232323; stroke-width: 1.6px; }
.isle .speck { fill: none; stroke-width: 2.4px; stroke-linecap: round; }
.border path { fill: none; stroke: #232323; stroke-width: 1.7px; }
.rail path { fill: none; stroke: #2eff70; stroke-width: 1.9px; }
.status { flex: 1; border-top: 2px solid #2a2a2a; border-bottom: 4px solid #1b1b1b; background: #323232; }

/* floating windows */
.win { position: absolute; background: #323232; border: 2px solid #5e5e5e; border-radius: 11px; box-shadow: 0 0 0 1.5px #111, 0 6px 46px 4px rgba(0,0,0,.5); display: flex; flex-direction: column; }
.titlebar { display: flex; align-items: center; position: relative; border-bottom: 2px solid #0d0d0d; border-radius: 9px 9px 0 0; background: linear-gradient(#323232, #2c2c2c); flex: none; }
.titlebar i { width: 24px; height: 24px; border-radius: 50%; background: #515151; margin-right: 16px; }
.titlebar h1 { position: absolute; inset: 0; margin: 0; display: flex; align-items: center; justify-content: center; font-size: 26px; font-weight: 400; letter-spacing: -0.1px; color: #757575; padding-left: 5px; }
.table { left: 1414px; top: 0; width: 1348px; height: 405px; }
.table .titlebar { height: 42px; padding-left: 14px; }
.tools { height: 62px; padding: 1px 0 0 5px; display: flex; align-items: center; flex: none; }
.tools svg { width: 33.3px; height: 35px; margin: -3px 8.25px 0; transform: scaleX(1.333); }
.tools .sep { width: 2px; height: 24px; margin: 0 6.6px; background: #2a2a2a; }
.grid { display: grid; grid-template-columns: 20px 197px 277px 200px 290px 201px; flex: none; background: #323232; }
.head { height: 36px; border-top: 2px solid #272727; border-bottom: 2px solid #262626; }
.head span { background: linear-gradient(#3d3d3d, #434343); border-right: 2px solid #5c5c5c; border-top: 1px solid #555; display: flex; align-items: center; justify-content: center; font-size: 22px; letter-spacing: -0.3px; padding-left: 2px; }
.head span:first-child, .head span:last-child { border-right: 0; }
.data { height: 59px; background: #1e1e1e; }
.data span { display: flex; align-items: center; padding: 0 5px 4px 9px; border-right: 1px solid #2c2c2c; border-bottom: 1px solid #2c2c2c; }
.data span:first-child { padding: 0 0 0 3px; font-size: 22px; background: #404040; border: 2px solid #2b2b2b; border-width: 0 2px 2px 0; }
.data .r { justify-content: flex-end; letter-spacing: -0.32px; }
.empty { flex: 1; border-left: 20px solid #323232; background: #1e1e1e; border-bottom: 1px solid #2b2b2b; }
.foot { height: 58px; display: flex; align-items: flex-start; padding: 9px 5px 0 6px; justify-content: space-between; flex: none; }
.show, .sel, .btn, .dots { border: 2px solid #5a5a5a; border-radius: 5px; background: linear-gradient(#464646, #3a3a3a); box-shadow: 0 0 0 2px #272727; }
.show { width: 234px; height: 42px; display: flex; align-items: center; gap: 6px; padding-left: 5px; font-size: 20px; letter-spacing: 0; color: #e6e6e6; position: relative; }
.show i, .dots i { position: absolute; right: 1px; bottom: 4px; width: 12px; height: 7px; background: #c0c0c0; clip-path: polygon(0 0, 100% 0, 50% 100%); }
.views { display: flex; align-items: center; gap: 12px; }
.sel { width: 45px; height: 42px; display: flex; align-items: center; justify-content: center; background: #353535; }

.dialog { left: 1420px; top: 406px; width: 1342px; height: 986px; }
.dialog .titlebar { height: 43px; padding-left: 14px; background: linear-gradient(#232323, #2e2e2e); }
.dialog .titlebar i { background: #474747; }
.dialog .titlebar h1 { color: #666; padding: 0 2px 0 0; letter-spacing: -.25px; }
.dlg-body { display: flex; padding: 22px 21px 0 21px; height: 753px; flex: none; }
.left { width: 751px; display: flex; flex-direction: column; }
.tabs { height: 51px; display: flex; align-items: flex-end; gap: 2px; margin-left: 1px; }
.tab { width: 91px; height: 46px; border: 2px solid #525252; border-bottom: 0; border-radius: 5px 5px 0 0; box-shadow: 0 0 0 2px #272727; background: #383838; color: #e2e2e2; display: flex; align-items: center; justify-content: center; padding-right: 2px; clip-path: inset(-3px -3px 0 -3px); }
.tab.on { width: 182px; height: 53px; margin-bottom: -2px; position: relative; background: #3d3d3d; z-index: 1; padding-bottom: 1px; }
.pane { height: 680px; border: 2px solid #525252; border-right-color: #444; border-bottom-color: #2a2a2a; display: flex; }
.form { width: 718px; padding: 9px 6px 0 10px; overflow: hidden; }
.form label { display: block; height: 36px; line-height: 36px; }
.form label.a { margin-top: 19px; }
.form label.b { margin-top: 12px; }
.frow { display: flex; margin-top: 9px; height: 47px; position: relative; }
.combo { width: 498px; height: 47px; border: 2px solid #575757; border-radius: 5px; box-shadow: 0 0 0 1px #262626; background: linear-gradient(#494949, #3a3a3a); color: #000; letter-spacing: -.35px; display: flex; align-items: center; padding-left: 9px; }
.combo span { margin: 2px auto 0 6px; }
.combo i { width: 15px; height: 8px; background: #1a1a1a; margin-right: 12px; clip-path: polygon(0 0, 100% 0, 50% 100%); }
.loop { margin: 4px 0 0 21px; }
.wr { margin: 3px 0 0 26px; }
.dots { width: 42px; height: 44px; margin: 1px 3px 0 auto; position: relative; font-size: 22px; line-height: 1; color: #fff; text-align: center; padding: 11px 0 0; }
.dots.short { height: 33px; margin-top: 2px; padding-top: 2px; }
.chk { margin-top: 25px; height: 28px; display: flex; align-items: center; gap: 10px; color: #e2e2e2; white-space: nowrap; letter-spacing: -.37px; }
.chk svg { width: 28px; height: 28px; background: #1e1e1e; border: 2px solid #282828; overflow: visible; }
.chk.off { color: #676767; }
.chk.off svg { background: #323232; border-color: #2a2a2a; }
.chk.last { margin-top: 21px; }
.input { height: 47px; margin-top: 9px; width: 701px; background: #1e1e1e; border: 2px solid #282828; border-radius: 4px; padding-left: 3.5px; line-height: 43px; }
.input.ph { width: 643px; margin-top: 0; color: #8a8a8a; line-height: 44px; }
.sbar { width: 29px; display: flex; flex-direction: column; background: #383838; border-left: 1px solid #262626; }
.sbar b { height: 26px; border: 2px solid #555; background: #3d3d3d; display: flex; align-items: center; justify-content: center; }
.sbar b::before { content: ""; width: 16px; height: 9px; background: #bbb; clip-path: polygon(50% 0, 100% 100%, 0 100%); }
.sbar b.down::before { clip-path: polygon(0 0, 100% 0, 50% 100%); }
.sbar i { height: 596px; margin-top: 2px; border: 2px solid #555; background: linear-gradient(90deg, #3c3c3c, #464646); }
.sbar em { flex: 1; border: 2px solid #272727; border-width: 2px 0; }
.mid { width: 34px; position: relative; padding: 3px 0 0 10px; }
.arrow { display: block; width: 8px; height: 16px; background: #b8b8b8; clip-path: polygon(100% 0, 100% 100%, 0 50%); }
.vdots { display: block; margin: 335px 0 0 8px; width: 4px; height: 34px; background: repeating-linear-gradient(#777 0 4px, transparent 4px 6px); }
.help { flex: 1; background: #1e1e1e; border: 2px solid #2a2a2a; padding: 9px 0 0 8px; color: #666; white-space: nowrap; letter-spacing: -0.36px; line-height: 32px; }
.help h2 { margin: 0; font-size: 39px; font-weight: 700; letter-spacing: -0.52px; line-height: 46px; color: #555; }
.help p { margin: 0 0 24px; }
.help h2 + p { margin-top: 24px; }
.prog { display: flex; gap: 14px; padding: 0 21px 0 20px; margin-top: 58px; height: 48px; flex: none; }
.bar { width: 1125px; background: #1e1e1e; border: 2px solid #282828; border-radius: 4px; display: flex; align-items: center; justify-content: center; color: #e2e2e2; }
.btn { width: 158px; height: 46px; color: #e2e2e2; flex: none; }
.prog .btn { width: 157px; margin-top: 1px; }
.btn.dis { color: #6e6e6e; }
.btns { display: flex; gap: 14px; padding: 0 21px 0 21px; margin-top: 13px; flex: none; }
.btns span { flex: 1; margin-right: -14px; }
.btn.wide { width: 296px; padding-right: 2px; }
.btn.run { border-color: #6a6f76; background: linear-gradient(#50555d, #43484f); box-shadow: 0 0 0 2px #5a9bea; }
```
